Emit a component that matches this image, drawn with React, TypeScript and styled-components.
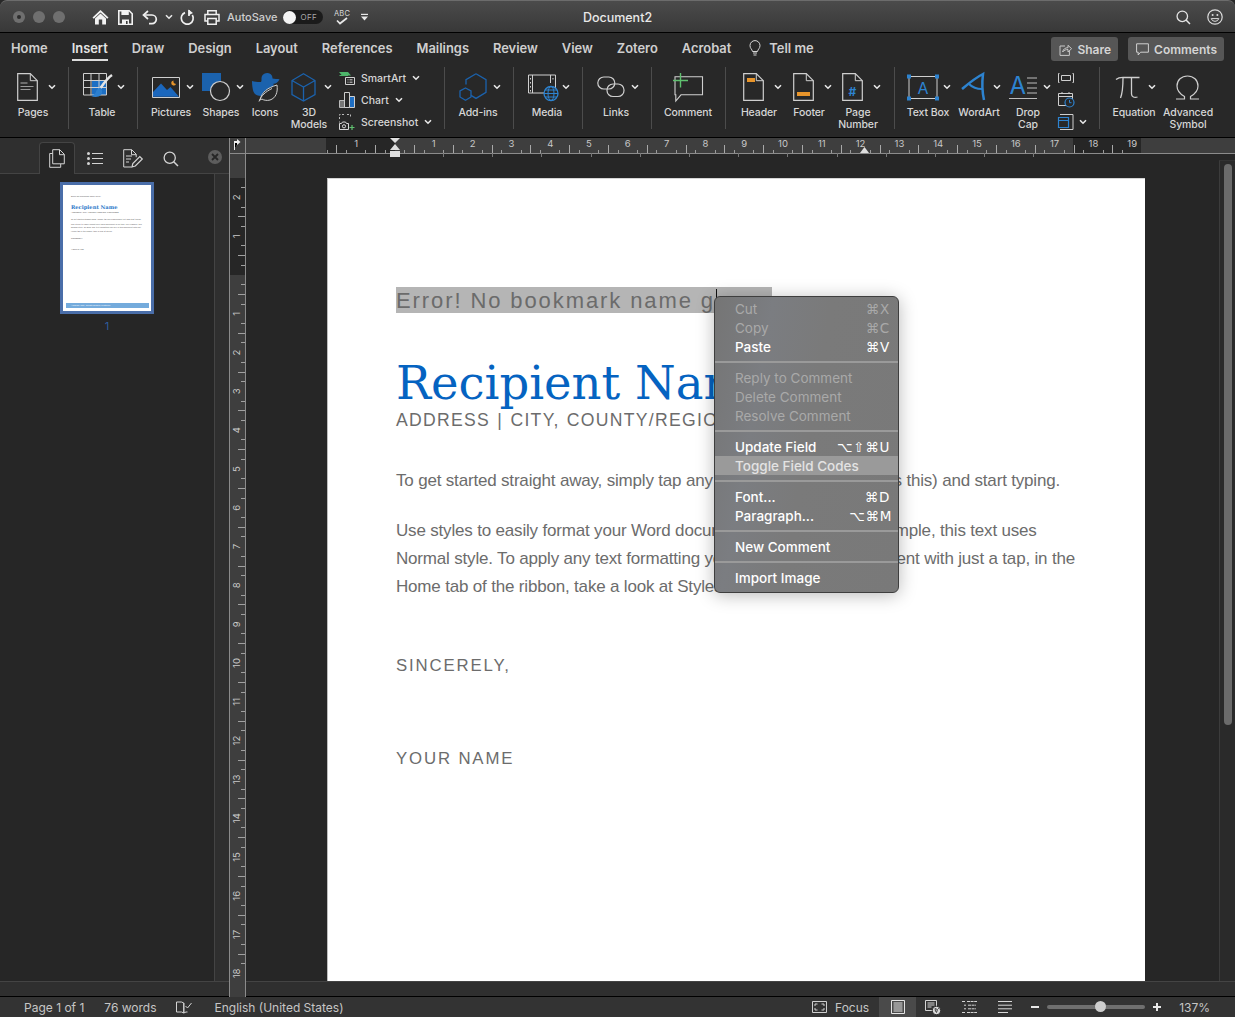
import React from "react";
import styled, { createGlobalStyle } from "styled-components";

const UI = `Inter, "Noto Sans", "DejaVu Sans", sans-serif`;
const BLUE = "#1b62ad";
const SKY = "#2d83d0";
const LINE = "#cfcfcf";
const ORANGE = "#e8952b";
const GREEN = "#5fc06f";

const Global = createGlobalStyle`
  html, body { margin: 0; padding: 0; background: #262626; }
  * { box-sizing: border-box; }
`;

const Root = styled.div`
  position: relative;
  width: 1235px;
  height: 1017px;
  overflow: hidden;
  display: flex;
  flex-direction: column;
  font-family: ${UI};
  background: #282828;
`;

/* ---------- title bar ---------- */
const TitleBar = styled.header`
  flex: none;
  height: 33px;
  padding-top: 1px;
  display: grid;
  grid-template-columns: 1fr auto 1fr;
  align-items: center;
  background: linear-gradient(#4b4b4b, #383838);
  border-top: 1px solid #6c6c6c;
  border-bottom: 1px solid #000;
  border-radius: 7px 7px 0 0;
`;
const TitleLeft = styled.div`
  display: flex;
  align-items: center;
  padding-left: 13px;
`;
const Light = styled.span`
  width: 12px;
  height: 12px;
  margin-right: 8px;
  border-radius: 50%;
  background: #6f6f6f;
  display: flex;
  align-items: center;
  justify-content: center;
  &:first-child::after {
    content: "";
    width: 4px;
    height: 4px;
    border-radius: 50%;
    background: #2c2c2c;
  }
`;
const QuickTools = styled.div`
  display: flex;
  align-items: center;
  margin-left: 19px;
  gap: 9px;
  color: #eee;
`;
const ChevSlot = styled.span`
  margin: 0 -2px 0 -2px;
`;
const AutoSave = styled.span`
  margin-left: -2px;
  font-size: 11px;
  font-weight: 500;
  color: #cfcfcf;
`;
const Toggle = styled.span`
  width: 40px;
  height: 14px;
  margin: 0 2px 0 -3px;
  border-radius: 7px;
  background: #1b1b1b;
  display: flex;
  align-items: center;
  font-size: 8px;
  letter-spacing: 0.4px;
  color: #a8a8a8;
  &::before {
    content: "";
    width: 13px;
    height: 13px;
    border-radius: 50%;
    background: #f3f3f3;
    margin-right: 4px;
  }
`;
const DocTitle = styled.div`
  font-size: 12.5px;
  font-weight: 500;
  color: #e8e8e8;
`;
const TitleRight = styled.div`
  display: flex;
  justify-content: flex-end;
  align-items: center;
  gap: 16px;
  padding-right: 12px;
`;

/* ---------- tabs ---------- */
const TabBar = styled.nav`
  flex: none;
  height: 33px;
  display: flex;
  align-items: flex-start;
  gap: 24px;
  padding: 1px 11px 0;
`;
const Tab = styled.span<{ $active?: boolean }>`
  height: 27px;
  line-height: 29px;
  font-size: 12.9px;
  font-weight: 600;
  color: ${(p) => (p.$active ? "#e4e4e4" : "#cfcfcf")};
  border-bottom: 2px solid ${(p) => (p.$active ? "#dcdcdc" : "transparent")};
`;
const TellMe = styled.span`
  height: 28px;
  display: flex;
  align-items: center;
  gap: 8px;
  margin-left: -6px;
  font-size: 12.9px;
  font-weight: 600;
  color: #cfcfcf;
`;
const TabActions = styled.div`
  margin: 3px 0 0 auto;
  display: flex;
  gap: 10px;
`;
const ActionButton = styled.button`
  height: 24px;
  padding: 0 7px 0 8px;
  display: flex;
  align-items: center;
  gap: 5px;
  border: 0;
  border-radius: 3px;
  background: #565656;
  color: #d4d4d4;
  font-family: ${UI};
  font-size: 12px;
  font-weight: 600;
`;

/* ---------- ribbon ---------- */
const Ribbon = styled.section`
  flex: none;
  height: 72px;
  display: flex;
  padding-top: 1px;
  border-bottom: 1px solid #000;
`;
const Group = styled.div<{ $w: number; $last?: boolean }>`
  flex: none;
  width: ${(p) => p.$w}px;
  height: 62px;
  display: flex;
  border-right: ${(p) => (p.$last ? "0" : "1px solid #4c4c4c")};
`;
const ToolBox = styled.div<{ $ml: number; $w: number }>`
  flex: none;
  width: ${(p) => p.$w}px;
  margin-left: ${(p) => p.$ml}px;
  padding-top: 2px;
  display: flex;
  flex-direction: column;
`;
const IconRow = styled.div<{ $ix: number; $cg: number }>`
  flex: none;
  height: 36px;
  padding-left: ${(p) => p.$ix}px;
  display: flex;
  align-items: center;
  gap: ${(p) => p.$cg}px;
  white-space: nowrap;
`;
const ToolLabel = styled.div`
  flex: none;
  margin-top: 2px;
  width: 100%;
  font-size: 10.5px;
  font-weight: 500;
  line-height: 12px;
  letter-spacing: -0.1px;
  text-align: center;
  white-space: pre;
  color: #d6d6d6;
`;
const SmallColumn = styled.div<{ $ml: number }>`
  flex: none;
  margin-left: ${(p) => p.$ml}px;
  height: 66px;
  display: flex;
  flex-direction: column;
`;
const SmallRow = styled.div<{ $gap?: number }>`
  flex: none;
  height: 22px;
  display: flex;
  align-items: center;
  gap: ${(p) => p.$gap ?? 6}px;
  font-size: 10.5px;
  font-weight: 500;
  color: #d6d6d6;
  white-space: nowrap;
`;

/* ---------- workspace ---------- */
const Workspace = styled.main`
  flex: 1;
  min-height: 0;
  display: flex;
`;
const Sidebar = styled.aside`
  flex: none;
  width: 229px;
  display: flex;
  flex-direction: column;
  background: #2f2f2f;
`;
const SideTabs = styled.div`
  flex: none;
  height: 36px;
  padding: 4px 0 0 39px;
  display: flex;
  align-items: flex-start;
  border-bottom: 1px solid #444;
`;
const SideTab = styled.span<{ $active?: boolean; $w: number }>`
  flex: none;
  width: ${(p) => p.$w}px;
  height: 32px;
  display: flex;
  align-items: center;
  justify-content: center;
  border-radius: 4px 4px 0 0;
  background: ${(p) => (p.$active ? "#262626" : "transparent")};
  border: 1px solid ${(p) => (p.$active ? "#444" : "transparent")};
  border-bottom: 0;
`;
const CloseDot = styled.span`
  width: 14px;
  height: 14px;
  margin: 8px 7px 0 auto;
  border-radius: 50%;
  background: #5d5d5d;
  display: flex;
  align-items: center;
  justify-content: center;
`;
const ThumbPane = styled.div`
  flex: 1;
  width: 215px;
  background: #262626;
  border-right: 1px solid #444;
  padding: 8px 0 0 60px;
`;
const Thumb = styled.div`
  width: 94px;
  height: 132px;
  border: 3px solid #4a6ea9;
  background: #fff;
  display: flex;
  flex-direction: column;
  padding: 10px 2px 2px;
  color: #555;
  overflow: hidden;
`;
const ThumbLine = styled.div<{ $mt?: number }>`
  flex: none;
  font-family: "Liberation Sans", sans-serif;
  font-size: 2.1px;
  line-height: 3.6px;
  padding-left: 6px;
  white-space: nowrap;
  margin-top: ${(p) => p.$mt ?? 0}px;
`;
const ThumbName = styled.div`
  flex: none;
  font-family: "DejaVu Serif", serif;
  font-size: 5.2px;
  font-weight: 700;
  line-height: 7px;
  color: #2a77c9;
  padding-left: 6px;
  margin-top: 5px;
`;
const ThumbFoot = styled.div`
  margin: auto 0 1px 1px;
  height: 5px;
  background: #74abdc;
  color: #fff;
  font-family: "Liberation Sans", sans-serif;
  font-size: 2.2px;
  line-height: 5px;
  padding-left: 5px;
`;
const ThumbNumber = styled.div`
  width: 94px;
  margin-top: 5px;
  text-align: center;
  font-size: 11px;
  color: #2e5c9e;
`;
const SideFoot = styled.div`
  flex: none;
  height: 15px;
  border-top: 1px solid #444;
`;

const Editor = styled.div`
  flex: 1;
  min-width: 0;
  display: flex;
  flex-direction: column;
`;
const RulerSvg = styled.svg`
  display: block;
  flex: none;
  position: relative;
  z-index: 1;
  overflow: visible;
  font-family: ${UI};
`;
const EditorBody = styled.div`
  flex: 1;
  min-height: 0;
  display: flex;
`;
const DocColumn = styled.div`
  flex: 1;
  min-width: 0;
  display: flex;
  flex-direction: column;
`;
const DocScroll = styled.div`
  flex: 1;
  min-height: 0;
  display: flex;
  background: #262626;
`;
const DocStage = styled.div`
  flex: 1;
  padding: 24px 0 0 81px;
`;
const Page = styled.article`
  position: relative;
  width: 818px;
  height: 803px;
  padding: 109px 0 0 68px;
  background: #fff;
  border-left: 1px solid #bdbdbd;
  border-top: 1px solid #d5d5d5;
  overflow: hidden;
  font-family: "Liberation Sans", Arial, sans-serif;
  color: #6c6c6c;
`;
const FieldError = styled.div`
  width: 376px;
  height: 26px;
  margin-top: -1px;
  line-height: 28px;
  background: #b5b5b5;
  color: #6b6b6b;
  font-size: 22px;
  letter-spacing: 1.9px;
  white-space: nowrap;
`;
const Caret = styled.span`
  position: absolute;
  left: 388px;
  top: 110px;
  width: 1px;
  height: 9px;
  background: #111;
`;
const Name = styled.h1`
  margin: 43px 0 0;
  font-family: "DejaVu Serif", "Liberation Serif", serif;
  font-size: 46.5px;
  font-weight: 400;
  line-height: 54px;
  color: #0563c1;
  white-space: nowrap;
`;
const Address = styled.div`
  font-size: 17.6px;
  line-height: 20px;
  letter-spacing: 1.3px;
  word-spacing: 1px;
  white-space: nowrap;
`;
const Para = styled.p<{ $mt: number }>`
  margin: ${(p) => p.$mt}px 0 0;
  font-size: 17px;
  line-height: 28px;
  letter-spacing: -0.18px;
  white-space: pre;
`;
const Closing = styled.div<{ $mt: number }>`
  margin-top: ${(p) => p.$mt}px;
  font-size: 16.8px;
  line-height: 24px;
  letter-spacing: 1.85px;
  white-space: nowrap;
`;
const ScrollTrack = styled.div`
  flex: none;
  width: 16px;
  margin-top: 6px;
  padding: 3px 0 0 4px;
  background: #2a2a2a;
  border-left: 1px solid #3c3c3c;
  border-top: 1px solid #333;
`;
const ScrollThumb = styled.div`
  width: 8px;
  height: 561px;
  border-radius: 4px;
  background: #6b6b6b;
`;
const DocFoot = styled.div`
  flex: none;
  height: 15px;
  background: #2f2f2f;
  border-top: 1px solid #444;
`;

/* ---------- status bar ---------- */
const StatusBar = styled.footer`
  flex: none;
  height: 21px;
  display: flex;
  align-items: center;
  justify-content: space-between;
  background: #333;
  border-top: 1px solid #000;
  font-size: 12px;
  color: #c6c6c6;
`;
const StatusGroup = styled.div`
  display: flex;
  align-items: center;
  height: 100%;
`;
const StatusText = styled.span<{ $ml: number; $mr?: number }>`
  margin-left: ${(p) => p.$ml}px;
  margin-right: ${(p) => p.$mr ?? 0}px;
  white-space: nowrap;
`;
const StatusIcon = styled.span<{ $ml: number; $w?: number; $active?: boolean }>`
  margin-left: ${(p) => p.$ml}px;
  width: ${(p) => (p.$w ? `${p.$w}px` : "auto")};
  height: 100%;
  display: flex;
  align-items: center;
  justify-content: center;
  background: ${(p) => (p.$active ? "#4a4a4a" : "transparent")};
`;
const Slider = styled.span`
  position: relative;
  width: 98px;
  height: 4px;
  margin-left: 8px;
  border-radius: 2px;
  background: #6f6f6f;
  &::after {
    content: "";
    position: absolute;
    left: 48px;
    top: -4px;
    width: 11px;
    height: 11px;
    border-radius: 50%;
    background: #cdcdcd;
  }
`;

/* ---------- context menu ---------- */
const Menu = styled.div`
  position: absolute;
  z-index: 5;
  left: 714px;
  top: 296px;
  width: 185px;
  height: 297px;
  padding-top: 2px;
  border: 1px solid #3e3e3e;
  border-radius: 6px;
  background: linear-gradient(100deg, #757575, #7b7d81 25%, #7a7a7a 50%, #797979);
  box-shadow: 0 2px 18px rgba(0, 0, 0, 0.28);
  font-size: 13.5px;
  font-weight: 500;
`;
const MenuRow = styled.div<{ $disabled?: boolean; $hot?: boolean }>`
  height: 19px;
  padding: 0 8px 0 20px;
  display: flex;
  align-items: center;
  justify-content: space-between;
  color: ${(p) => (p.$disabled ? "#a9a9a9" : p.$hot ? "#e3e3e3" : "#fff")};
  font-weight: ${(p) => (p.$disabled ? 400 : 500)};
  background: ${(p) => (p.$hot ? "#9a9a9a" : "transparent")};
  white-space: nowrap;
`;
const Shortcut = styled.span<{ $nudge?: number }>`
  font-family: "DejaVu Sans", ${UI};
  font-size: 13.5px;
  letter-spacing: 0.7px;
  margin-right: ${(p) => p.$nudge ?? 0}px;
`;
const MenuSep = styled.div`
  height: 2px;
  margin: 5px 0;
  background: #9a9a9a;
`;

/* ---------- icons ---------- */
const IconSvg = styled.svg`
  flex: none;
  display: block;
  overflow: visible;
`;
const Svg: React.FC<{ w: number; h: number; children: React.ReactNode }> = ({ w, h, children }) => (
  <IconSvg width={w} height={h} viewBox={`0 0 ${w} ${h}`} fill="none">
    {children}
  </IconSvg>
);
const Chev = ({ c = "#e8e8e8" }: { c?: string }) => (
  <Svg w={8} h={6}>
    <path d="M1 1.2l3 3 3-3" stroke={c} strokeWidth="1.6" />
  </Svg>
);
const Home = () => (
  <Svg w={17} h={16}>
    <path d="M0.5 8.5L8.5 1l8 7.5-1.3 1.2L8.5 3.6 1.8 9.7z" fill="#f2f2f2" />
    <path d="M3 9.5l5.5-5 5.5 5V15.5h-3.8v-5H6.8v5H3z" fill="#f2f2f2" />
  </Svg>
);
const Save = () => (
  <Svg w={15} h={15}>
    <path d="M.8.8h10.4L14.2 3.8v10.4H.8z" stroke="#f2f2f2" strokeWidth="1.6" />
    <path d="M3.4 1h7.4v4H3.4zM4 9.5h7v5H4z" fill="#f2f2f2" />
    <path d="M8 11h1.6v3H8z" fill="#3e3e3e" />
  </Svg>
);
const Undo = () => (
  <Svg w={16} h={15}>
    <path d="M6 1L1.5 5 6 9" stroke="#f0f0f0" strokeWidth="1.7" />
    <path d="M2 5h8a4.2 4.2 0 0 1 0 8.6H7" stroke="#f0f0f0" strokeWidth="1.7" />
  </Svg>
);
const Redo = () => (
  <Svg w={15} h={16}>
    <path d="M5 3.6A6 6 0 1 0 12.3 6" stroke="#f0f0f0" strokeWidth="1.7" />
    <path d="M8.5 .5v6l1.6-1L13 4z" fill="#f0f0f0" />
    <path d="M9 1v6" stroke="#f0f0f0" strokeWidth="1.7" />
  </Svg>
);
const PrintIcon = () => (
  <Svg w={16} h={15}>
    <path d="M3.8 4V.8h8.4V4M3.6 11H1V4.6h14V11h-2.6M3.8 8.6h8.4v5.6H3.8z" stroke="#f0f0f0" strokeWidth="1.5" />
  </Svg>
);
const Spell = () => (
  <Svg w={17} h={17}>
    <text x="0" y="7" fontSize="7.5" fontFamily={UI} fill="#d8d8d8" letterSpacing="0.2">ABC</text>
    <path d="M3 11.5l3 3 7-5.5" stroke="#e8e8e8" strokeWidth="1.7" />
  </Svg>
);
const Customize = () => (
  <Svg w={9} h={8}>
    <path d="M1 .8h7v1.2H1z" fill="#e8e8e8" />
    <path d="M1 3.6h7L4.5 7.6z" fill="#e8e8e8" />
  </Svg>
);
const Search = ({ c = "#e4e4e4", s = 15 }: { c?: string; s?: number }) => (
  <Svg w={s} h={s}>
    <circle cx={s * 0.42} cy={s * 0.42} r={s * 0.35} stroke={c} strokeWidth="1.3" />
    <path d={`M${s * 0.67} ${s * 0.67}L${s - 1} ${s - 1}`} stroke={c} strokeWidth="1.5" />
  </Svg>
);
const Smile = () => (
  <Svg w={16} h={16}>
    <circle cx="8" cy="8" r="7.2" stroke="#dcdcdc" strokeWidth="1.2" />
    <circle cx="5.6" cy="6" r="1" fill="#dcdcdc" />
    <circle cx="10.4" cy="6" r="1" fill="#dcdcdc" />
    <path d="M4.2 9.6a4 4 0 0 0 7.6 0z" stroke="#dcdcdc" />
  </Svg>
);
const Bulb = () => (
  <Svg w={12} h={17}>
    <path d="M3.5 11.5C3 9 1 8.5 1 5.6a5 5 0 0 1 10 0c0 2.9-2 3.4-2.5 5.9z" stroke="#d6d6d6" />
    <path d="M4 13h4M4.5 15h3" stroke="#d6d6d6" />
  </Svg>
);
const ShareIcon = () => (
  <Svg w={13} h={13}>
    <path d="M6 3H1v9.4h9.4V8" stroke="#c8c8c8" />
    <path d="M3.6 9c.6-3 2.7-4.3 5.4-4.3V2.3l3.6 3.4L9 9V6.5C7 6.5 5 7.2 3.6 9z" stroke="#c8c8c8" />
  </Svg>
);
const CommentSmall = () => (
  <Svg w={13} h={13}>
    <path d="M.6.8h11.8v8.4H4.6L2.2 12V9.2H.6z" stroke="#d0d0d0" />
  </Svg>
);
const Fold = ({ children }: { children?: React.ReactNode }) => (
  <Svg w={21} h={28}>
    <path d="M.7.7h12.6l7 7v19.6H.7z" stroke={LINE} strokeWidth="1.2" />
    <path d="M13.3.7v7h7" stroke={LINE} />
    {children}
  </Svg>
);
const PagesIcon = () => (
  <Fold>
    <path d="M3.5 10h7" stroke="#9a9a9a" strokeWidth="1.2" />
    <path d="M3.5 13.5h13M3.5 16.5h10" stroke="#9a9a9a" />
  </Fold>
);
const TableIcon = () => (
  <Svg w={30} h={28}>
    <path d="M9 8h14v14H9z" fill="#1d6fc4" />
    <path d="M.5.5h23v21.5H.5zM.5 7.5h23M.5 14.5h23M8 .5v21.5M16 .5v21.5" stroke={LINE} />
    <path d="M29 2c-3 2-8 8-11.5 13" stroke="#e4e4e4" strokeWidth="2.6" />
    <path d="M17 14.5c-3 1-3.6 3-4.3 5-1 2-3 3-4.6 3.5 3 1.5 8 1.5 10-1.5 1.6-2 1.6-4.6-1.1-7z" fill="#2c7fcf" />
  </Svg>
);
const PicturesIcon = () => (
  <Svg w={28} h={21}>
    <path d="M.5.5h27v20H.5z" stroke={LINE} />
    <path d="M1 19.7V15l8-8.5L15 13l3.5-3 8.5 9.7z" fill="#1b67bd" />
    <path d="M21.5 3.5a2.5 2.5 0 1 0 2.5 3.5 3 3 0 0 1-2.5-3.5z" fill={ORANGE} />
  </Svg>
);
const ShapesIcon = () => (
  <Svg w={28} h={28}>
    <path d="M0 0h19v18H0z" fill={BLUE} />
    <circle cx="18" cy="18" r="9.5" fill="#282828" stroke={LINE} strokeWidth="1.2" />
  </Svg>
);
const IconsIcon = () => (
  <Svg w={28} h={30}>
    <path d="M0 9c3 1 7 1 9 1 1-2 0-3.5 1-6 1.5-3 6-4 8.5-2 1.5 1 2 3 2 4.500 2 .5 5 .3 7 .7-1 2.5-3.5 4.5-6 4.5 .5 4-1 8.5-6 11-5 2-12 2-14-3C.5 17 0 13 0 9z" fill={BLUE} />
    <path d="M8 28c2-8 7-12 17-15 1 7-1 13-7 15-3 1-7 0-8-1z" fill="#282828" stroke={LINE} />
    <path d="M7 29.5c2-6 7-10 13-13" stroke={LINE} />
  </Svg>
);
const CubeIcon = () => (
  <Svg w={25} h={29}>
    <path d="M12.5 .8l11.5 6.7v14L12.5 28 1 21.5v-14zM1 7.5l11.5 6.5L24 7.5M12.5 14v14" stroke={BLUE} strokeWidth="1.3" />
  </Svg>
);
const SmartArtIcon = () => (
  <Svg w={16} h={13}>
    <path d="M0 0h9l3 3.5H3z" fill="#4db56a" />
    <path d="M.5 3.5H9" stroke="#4db56a" />
    <path d="M6.5 5.5h9v7h-9zM8.5 7.8h1M10.5 7.8h3M8.5 10.2h1M10.5 10.2h3" stroke="#d0d0d0" />
  </Svg>
);
const ChartIcon = () => (
  <Svg w={16} h={16}>
    <path d="M.5 8.5h5v7h-5z" fill="#777" stroke="#bbb" />
    <path d="M5.5 .5h5v15h-5z" stroke="#ccc" />
    <path d="M10.5 4.5h5v11h-5z" fill="#1f6fc4" stroke="#cfcfcf" />
  </Svg>
);
const ScreenshotIcon = () => (
  <Svg w={16} h={16}>
    <path d="M.5 5V.5h5M8 .5h3.5v3M.5 7.5v1" stroke="#bbb" strokeDasharray="2 1.5" />
    <path d="M.5 9.5h2l1-1.5h3l1 1.5h2v6h-9z" stroke="#d8d8d8" />
    <circle cx="5" cy="12.3" r="1.6" stroke="#d8d8d8" />
    <path d="M13 11v5M10.5 13.5h5" stroke="#5fc06f" strokeWidth="1.2" />
  </Svg>
);
const AddinsIcon = () => (
  <Svg w={28} h={28}>
    <path d="M17 .8l10 5.8v12.8l-10 6-5-3M7 11.5V6.6L17 .8" stroke={BLUE} strokeWidth="1.3" />
    <path d="M6.5 15l5.5 3v6l-5.5 3.2L1 24v-6z" stroke={BLUE} strokeWidth="1.3" />
  </Svg>
);
const MediaIcon = () => (
  <Svg w={30} h={27}>
    <path d="M.5 1h27v18H.5z" stroke={LINE} />
    <path d="M4.5 1v18M22.5 1v8" stroke={LINE} />
    <path d="M2 4h1v1.5H2zM2 8h1v1.5H2zM2 12h1v1.5H2zM2 16h1v1.5H2zM24.5 4h1v1.5h-1z" fill={LINE} />
    <circle cx="23" cy="19.5" r="7" fill="#282828" stroke={SKY} strokeWidth="1.3" />
    <ellipse cx="23" cy="19.5" rx="3" ry="7" stroke={SKY} />
    <path d="M16 19.5h14M17 16h12M17 23h12" stroke={SKY} />
  </Svg>
);
const LinksIcon = () => (
  <Svg w={28} h={22}>
    <rect x=".8" y="1" width="17" height="12" rx="6" stroke={LINE} strokeWidth="1.2" />
    <rect x="10" y="8" width="17" height="12.5" rx="6" stroke={LINE} strokeWidth="1.2" />
  </Svg>
);
const CommentIcon = () => (
  <Svg w={31} h={29}>
    <path d="M3 3.8h27.5v18H9L3.8 28V21.8H3z" stroke={LINE} strokeWidth="1.1" />
    <path d="M8.5 0v14.5M1 7.5h15" stroke={GREEN} strokeWidth="1.4" />
  </Svg>
);
const HeaderIcon = () => (
  <Fold>
    <path d="M4 5h8v4H4z" fill={ORANGE} />
  </Fold>
);
const FooterIcon = () => (
  <Fold>
    <path d="M4 19h13v4H4z" fill={ORANGE} />
  </Fold>
);
const PageNumIcon = () => (
  <Fold>
    <text x="6.5" y="23" fontSize="12" fontWeight="700" fontFamily={UI} fill={SKY}>#</text>
  </Fold>
);
const TextBoxIcon = () => (
  <Svg w={32} h={26}>
    <path d="M2 2.5h28v22H2z" stroke={LINE} />
    <path d="M0 .5h4v4H0zM28 .5h4v4h-4zM0 22.5h4v4H0zM28 22.5h4v4h-4z" fill={SKY} />
    <text x="16" y="20" textAnchor="middle" fontSize="16" fontFamily={UI} fill={SKY}>A</text>
  </Svg>
);
const WordArtIcon = () => (
  <Svg w={24} h={28}>
    <path d="M1 16C7 11 14 5 22 1c-1 8-1 17 1 26" stroke={SKY} strokeWidth="2.5" />
    <path d="M8 11c3 3 8 5 13 5" stroke={SKY} strokeWidth="2.2" />
  </Svg>
);
const DropCapIcon = () => (
  <Svg w={28} h={25}>
    <text x="0.5" y="19" fontSize="24" fontFamily={UI} fill={SKY}>A</text>
    <path d="M18 3h10M18 8h10M18 13h10M18 18h10" stroke="#bdbdbd" />
    <path d="M0 23.5h28" stroke="#bdbdbd" />
  </Svg>
);
const ObjectBox = () => (
  <Svg w={16} h={10}>
    <path d="M1.5.5h-1v9h1M14.5.5h1v9h-1" stroke={LINE} />
    <path d="M3.5 2.5h9v5h-9z" stroke={LINE} />
  </Svg>
);
const DateIcon = () => (
  <Svg w={17} h={16}>
    <path d="M.5 1.5h14v12h-14zM.5 4.5h14M4 0v2M11 0v2" stroke={LINE} />
    <circle cx="11.5" cy="10.5" r="4.5" fill="#282828" stroke={SKY} strokeWidth="1.2" />
    <path d="M11.5 8v2.7h2" stroke={SKY} />
  </Svg>
);
const ObjectIcon = () => (
  <Svg w={16} h={16}>
    <path d="M2 .5h13v15H2" stroke={LINE} />
    <path d="M.5 3.5h10v10H.5zM.5 6.5h10" stroke={SKY} strokeWidth="1.2" />
  </Svg>
);
const PiIcon = () => (
  <Svg w={24} h={23}>
    <path d="M0 3.5C3 1 5 1.5 9 1.5h14.5" stroke="#cfcfcf" strokeWidth="1.3" />
    <path d="M7 2c0 7-.5 15-2.5 20" stroke="#cfcfcf" strokeWidth="1.3" />
    <path d="M15.5 2v16c0 3 3 4 6 3" stroke="#cfcfcf" strokeWidth="1.3" />
  </Svg>
);
const OmegaIcon = () => (
  <Svg w={25} h={25}>
    <path d="M1 24h8.5v-2.5C5 19 2 15.5 2 11 2 5 6.5 1 12.5 1S23 5 23 11c0 4.5-3 8-7.5 10.5V24H24" stroke="#cfcfcf" strokeWidth="1.2" />
  </Svg>
);
const PageTabIcon = () => (
  <Svg w={16} h={19}>
    <path d="M.7 4.5h3M.7 4.5v13.8h11V15" stroke="#d4d4d4" />
    <path d="M3.7.7h7l4.6 4.6v9.5H3.7zM10.5.7v5h4.8" stroke="#d4d4d4" />
  </Svg>
);
const OutlineTabIcon = () => (
  <Svg w={16} h={13}>
    <path d="M5 1.5h11M5 6.5h11M5 11.5h11" stroke="#d4d4d4" />
    <circle cx="1.5" cy="1.5" r="1.5" fill="#d4d4d4" />
    <circle cx="1.5" cy="6.5" r="1.5" fill="#d4d4d4" />
    <circle cx="1.5" cy="11.5" r="1.5" fill="#d4d4d4" />
  </Svg>
);
const ReviewTabIcon = () => (
  <Svg w={20} h={19}>
    <path d="M8.5 18H.7V.7h8l4.5 4.5v3M8.5.7v5h4.7M3 7h6M3 10h5M3 13h3" stroke="#d4d4d4" />
    <path d="M9 18l.8-3.5 7-7 2.5 2.5-7 7z" stroke="#d4d4d4" strokeWidth="1.2" />
  </Svg>
);
const CloseX = () => (
  <Svg w={8} h={8}>
    <path d="M1 1l6 6M7 1L1 7" stroke="#262626" strokeWidth="1.8" />
  </Svg>
);
const Book = () => (
  <Svg w={16} h={13}>
    <path d="M.5 1h5l2.3 1v10L5.500 11h-5zM7.8 2v10l2.2-1h1.500" stroke="#d4d4d4" />
    <path d="M9.5 5l2 2 4-5" stroke="#d4d4d4" />
  </Svg>
);
const FocusIcon = () => (
  <Svg w={15} h={12}>
    <path d="M.5.5h14v11H.5z" stroke="#cfcfcf" />
    <path d="M3 5V3h2.5M12 5V3H9.5M3 7v2h2.5M12 7v2H9.5" stroke="#cfcfcf" />
  </Svg>
);
const PrintLayout = () => (
  <Svg w={14} h={14}>
    <path d="M.5.5h13v13H.5z" stroke="#e4e4e4" />
    <path d="M2.5 3h9M2.5 5h9M2.5 7h9M2.5 9h9M2.5 11h9" stroke="#e4e4e4" />
  </Svg>
);
const WebLayout = () => (
  <Svg w={16} h={15}>
    <path d="M.5.5h11v10H.5zM2.5 3h7M2.5 5h7M2.5 7h4" stroke="#d4d4d4" />
    <circle cx="11.5" cy="10.5" r="4.2" fill="#d8d8d8" stroke="#333" />
    <path d="M10 8.5l2.5 1-1 3-1-1.5zM13 8l1.5 1" stroke="#444" />
  </Svg>
);
const OutlineLayout = () => (
  <Svg w={15} h={12}>
    <path d="M0 .5h3M5 .5h10M2 4.2h2M6 4.2h8M2 7.8h2M6 7.8h8M0 11.5h3M5 11.5h10" stroke="#d4d4d4" strokeDasharray="3 .6" />
  </Svg>
);
const DraftLayout = () => (
  <Svg w={14} h={12}>
    <path d="M0 .5h14M0 4.2h14M0 7.8h14M0 11.5h10" stroke="#d8d8d8" />
  </Svg>
);
const Minus = () => (
  <Svg w={8} h={2}>
    <path d="M0 0h8v2H0z" fill="#e8e8e8" />
  </Svg>
);
const Plus = () => (
  <Svg w={8} h={8}>
    <path d="M3 0h2v3h3v2H5v3H3V5H0V3h3z" fill="#e8e8e8" />
  </Svg>
);

/* ---------- rulers ---------- */
const HRuler = () => {
  const X0 = 229;
  const x = (v: number) => v - X0;
  const unit = 38.8;
  const origin = 395;
  const ticks: React.ReactNode[] = [];
  for (let i = -7; i < 151; i++) {
    const px = origin + (i * unit) / 4;
    if (i % 4 === 0) continue;
    if (px < 327 || px > 1140) continue;
    const tall = i % 2 === 0;
    ticks.push(
      <path
        key={i}
        d={`M${x(px)} ${tall ? 7 : 12}V15`}
        stroke={tall ? "#a8a8a8" : "#9a9a9a"}
      />
    );
  }
  const nums: React.ReactNode[] = [];
  for (let n = -1; n <= 19; n++) {
    if (n === 0) continue;
    nums.push(
      <text key={n} x={x(origin + n * unit)} y={9} fontSize="9.5" textAnchor="middle" fill="#c8c8c8">
        {Math.abs(n)}
      </text>
    );
  }
  const stops: React.ReactNode[] = [];
  for (let k = 0; k < 13; k++) {
    const px = 443.5 + k * 49.2;
    stops.push(<path key={k} d={`M${x(px)} 15v4`} stroke="#777" />);
  }
  return (
    <RulerSvg width={1006} height={16} viewBox="0 0 1006 16" shapeRendering="crispEdges">
      <rect width="1006" height="15" fill="#3e3e3e" />
      <rect x={x(326)} width="69" height="15" fill="#262626" />
      <rect x={x(1073)} width="68" height="15" fill="#262626" />
      <rect y="15" width="1006" height="1" fill="#262626" />
      <path d="M0 15.5H1006" stroke="#8b8b8b" />
      <path d="M0.5 0V16M16.5 0V16" stroke="#8b8b8b" />
      <path d="M5.5 12V4h3" stroke="#eee" strokeWidth="1.4" />
      <path d="M8 1v6l3.5-3z" fill="#eee" shapeRendering="auto" />
      {ticks}
      <g shapeRendering="auto">{nums}</g>
      {stops}
      <g shapeRendering="auto">
        <path d={`M${x(390)} 0h10l-5 5zM${x(390)} 12l5-6 5 6z`} fill="#dedede" />
        <rect x={x(390)} y="13" width="10" height="6" fill="#dedede" />
        <path d={`M${x(860)} 15l4.5-6 4.5 6z`} fill="#dedede" />
      </g>
    </RulerSvg>
  );
};

const VRuler = () => {
  const unit = 38.8;
  const origin = 275;
  const H = 843;
  const y = (v: number) => v - 154;
  const ticks: React.ReactNode[] = [];
  for (let i = -9; i < 73; i++) {
    const py = origin + (i * unit) / 4;
    if (i % 4 === 0) continue;
    const tall = i % 2 === 0;
    ticks.push(<path key={i} d={`M${tall ? 9 : 12} ${y(py)}H16`} stroke="#a0a0a0" />);
  }
  const nums: React.ReactNode[] = [];
  const label = (n: number, py: number) => (
    <text
      key={`${n}-${py}`}
      transform={`translate(10.5 ${y(py)}) rotate(-90)`}
      fontSize="9.5"
      textAnchor="middle"
      fill="#c8c8c8"
    >
      {n}
    </text>
  );
  nums.push(label(2, origin - 2 * unit), label(1, origin - unit));
  for (let n = 1; n <= 18; n++) nums.push(label(n, origin + n * unit));
  return (
    <RulerSvg width={17} height={H} viewBox={`0 0 17 ${H}`} shapeRendering="crispEdges">
      <rect width="17" height={H} fill="#3e3e3e" />
      <rect y={y(178)} width="17" height="97" fill="#262626" />
      {ticks}
      <g shapeRendering="auto">{nums}</g>
      <path d={`M0.5 0V${H}M16.5 0V${H}`} stroke="#8b8b8b" />
    </RulerSvg>
  );
};

/* ---------- composed parts ---------- */
type ToolProps = {
  label: string;
  ml: number;
  w: number;
  ix: number;
  cg?: number;
  icon: React.ReactNode;
};
const Tool: React.FC<ToolProps> = ({ label, ml, w, ix, cg, icon }) => (
  <ToolBox $ml={ml} $w={w}>
    <IconRow $ix={ix} $cg={cg ?? 0}>
      {icon}
      {cg !== undefined && <Chev />}
    </IconRow>
    <ToolLabel>{label}</ToolLabel>
  </ToolBox>
);

const Item: React.FC<{ label: string; keys?: string; disabled?: boolean; hot?: boolean; nudge?: number }> = ({
  label,
  keys,
  disabled,
  hot,
  nudge,
}) => (
  <MenuRow $disabled={disabled} $hot={hot}>
    <span>{label}</span>
    {keys && <Shortcut $nudge={nudge}>{keys}</Shortcut>}
  </MenuRow>
);

const tabs = ["Home", "Insert", "Draw", "Design", "Layout", "References", "Mailings", "Review", "View", "Zotero", "Acrobat"];

export default function App() {
  return (
    <Root>
      <Global />
      <TitleBar>
        <TitleLeft>
          <Light />
          <Light />
          <Light />
          <QuickTools>
            <Home />
            <Save />
            <Undo />
            <ChevSlot>
              <Chev />
            </ChevSlot>
            <Redo />
            <PrintIcon />
            <AutoSave>AutoSave</AutoSave>
            <Toggle>OFF</Toggle>
            <Spell />
            <Customize />
          </QuickTools>
        </TitleLeft>
        <DocTitle>Document2</DocTitle>
        <TitleRight>
          <Search />
          <Smile />
        </TitleRight>
      </TitleBar>

      <TabBar>
        {tabs.map((t) => (
          <Tab key={t} $active={t === "Insert"}>
            {t}
          </Tab>
        ))}
        <TellMe>
          <Bulb />
          Tell me
        </TellMe>
        <TabActions>
          <ActionButton>
            <ShareIcon />
            Share
          </ActionButton>
          <ActionButton>
            <CommentSmall />
            Comments
          </ActionButton>
        </TabActions>
      </TabBar>

      <Ribbon>
        <Group $w={69}>
          <Tool label="Pages" ml={8} w={50} ix={9} cg={10} icon={<PagesIcon />} />
        </Group>
        <Group $w={69}>
          <Tool label="Table" ml={8} w={50} ix={6} cg={4} icon={<TableIcon />} />
        </Group>
        <Group $w={307}>
          <Tool label="Pictures" ml={12} w={42} ix={2} cg={6} icon={<PicturesIcon />} />
          <Tool label="Shapes" ml={9} w={40} ix={1} cg={6} icon={<ShapesIcon />} />
          <Tool label="Icons" ml={9} w={30} ix={2} icon={<IconsIcon />} />
          <Tool label={"3D\nModels"} ml={9} w={40} ix={2} cg={8} icon={<CubeIcon />} />
          <SmallColumn $ml={10}>
            <SmallRow>
              <SmartArtIcon />
              SmartArt
              <Chev />
            </SmallRow>
            <SmallRow>
              <ChartIcon />
              Chart
              <Chev />
            </SmallRow>
            <SmallRow>
              <ScreenshotIcon />
              Screenshot
              <Chev />
            </SmallRow>
          </SmallColumn>
        </Group>
        <Group $w={69}>
          <Tool label="Add-ins" ml={13} w={40} ix={1} cg={6} icon={<AddinsIcon />} />
        </Group>
        <Group $w={69}>
          <Tool label="Media" ml={13} w={40} ix={1} cg={4} icon={<MediaIcon />} />
        </Group>
        <Group $w={69}>
          <Tool label="Links" ml={13} w={40} ix={1} cg={6} icon={<LinksIcon />} />
        </Group>
        <Group $w={74}>
          <Tool label="Comment" ml={11} w={50} ix={9} icon={<CommentIcon />} />
        </Group>
        <Group $w={169}>
          <Tool label="Header" ml={14} w={38} ix={3} cg={10} icon={<HeaderIcon />} />
          <Tool label="Footer" ml={12} w={38} ix={3} cg={10} icon={<FooterIcon />} />
          <Tool label={"Page\nNumber"} ml={8} w={44} ix={6} cg={10} icon={<PageNumIcon />} />
        </Group>
        <Group $w={205}>
          <Tool label="Text Box" ml={11} w={44} ix={1} cg={4} icon={<TextBoxIcon />} />
          <Tool label="WordArt" ml={7} w={44} ix={4} cg={8} icon={<WordArtIcon />} />
          <Tool label={"Drop\nCap"} ml={7} w={40} ix={1} cg={6} icon={<DropCapIcon />} />
          <SmallColumn $ml={10}>
            <SmallRow>
              <ObjectBox />
            </SmallRow>
            <SmallRow>
              <DateIcon />
            </SmallRow>
            <SmallRow $gap={5}>
              <ObjectIcon />
              <Chev />
            </SmallRow>
          </SmallColumn>
        </Group>
        <Group $w={135} $last>
          <Tool label="Equation" ml={11} w={46} ix={5} cg={8} icon={<PiIcon />} />
          <Tool label={"Advanced\nSymbol"} ml={5} w={52} ix={13} icon={<OmegaIcon />} />
        </Group>
      </Ribbon>

      <Workspace>
        <Sidebar>
          <SideTabs>
            <SideTab $active $w={36}>
              <PageTabIcon />
            </SideTab>
            <SideTab $w={40}>
              <OutlineTabIcon />
            </SideTab>
            <SideTab $w={36}>
              <ReviewTabIcon />
            </SideTab>
            <SideTab $w={40}>
              <Search c="#d4d4d4" s={16} />
            </SideTab>
            <CloseDot>
              <CloseX />
            </CloseDot>
          </SideTabs>
          <ThumbPane>
            <Thumb>
              <ThumbLine>Error! No bookmark name given.</ThumbLine>
              <ThumbName>Recipient Name</ThumbName>
              <ThumbLine>ADDRESS | CITY, COUNTY/REGION, POSTCODE</ThumbLine>
              <ThumbLine $mt={3.5}>To get started straight away, simply tap any placeholder text and start typing.</ThumbLine>
              <ThumbLine $mt={1.4}>Use styles to easily format your Word document in no time. For example, this</ThumbLine>
              <ThumbLine>Normal style. To apply any text formatting you see in this document with just</ThumbLine>
              <ThumbLine>Home tab of the ribbon, take a look at Styles.</ThumbLine>
              <ThumbLine $mt={4}>SINCERELY,</ThumbLine>
              <ThumbLine $mt={7.4}>YOUR NAME</ThumbLine>
              <ThumbFoot>Address | City, County/Region, Postcode</ThumbFoot>
            </Thumb>
            <ThumbNumber>1</ThumbNumber>
          </ThumbPane>
          <SideFoot />
        </Sidebar>

        <Editor>
          <HRuler />
          <EditorBody>
            <VRuler />
            <DocColumn>
              <DocScroll>
                <DocStage>
                  <Page>
                    <FieldError>Error! No bookmark name g</FieldError>
                    <Caret />
                    <Name>Recipient Name</Name>
                    <Address>ADDRESS | CITY, COUNTY/REGION, POSTCODE</Address>
                    <Para $mt={37}>To get started straight away, simply tap any placeholder text (such as this) and start typing.</Para>
                    <Para $mt={22}>
                      {"Use styles to easily format your Word document in no time.  For example, this text uses\nNormal style. To apply any text formatting you can see in this document with just a tap, in the\nHome tab of the ribbon, take a look at Styles."}
                    </Para>
                    <Closing $mt={53}>SINCERELY,</Closing>
                    <Closing $mt={69}>YOUR NAME</Closing>
                  </Page>
                </DocStage>
                <ScrollTrack>
                  <ScrollThumb />
                </ScrollTrack>
              </DocScroll>
              <DocFoot />
            </DocColumn>
          </EditorBody>
        </Editor>
      </Workspace>

      <StatusBar>
        <StatusGroup>
          <StatusText $ml={24}>Page 1 of 1</StatusText>
          <StatusText $ml={20}>76 words</StatusText>
          <StatusIcon $ml={19}>
            <Book />
          </StatusIcon>
          <StatusText $ml={23}>English (United States)</StatusText>
        </StatusGroup>
        <StatusGroup>
          <StatusIcon $ml={0}>
            <FocusIcon />
          </StatusIcon>
          <StatusText $ml={8}>Focus</StatusText>
          <StatusIcon $ml={10} $w={37} $active>
            <PrintLayout />
          </StatusIcon>
          <StatusIcon $ml={9}>
            <WebLayout />
          </StatusIcon>
          <StatusIcon $ml={21}>
            <OutlineLayout />
          </StatusIcon>
          <StatusIcon $ml={21}>
            <DraftLayout />
          </StatusIcon>
          <StatusIcon $ml={19}>
            <Minus />
          </StatusIcon>
          <Slider />
          <StatusIcon $ml={8}>
            <Plus />
          </StatusIcon>
          <StatusText $ml={18} $mr={25}>
            137%
          </StatusText>
        </StatusGroup>
      </StatusBar>

      <Menu>
        <Item label="Cut" keys="⌘X" disabled />
        <Item label="Copy" keys="⌘C" disabled />
        <Item label="Paste" keys="⌘V" />
        <MenuSep />
        <Item label="Reply to Comment" disabled />
        <Item label="Delete Comment" disabled />
        <Item label="Resolve Comment" disabled />
        <MenuSep />
        <Item label="Update Field" keys="⌥⇧⌘U" />
        <Item label="Toggle Field Codes" hot />
        <MenuSep />
        <Item label="Font..." keys="⌘D" />
        <Item label="Paragraph..." keys="⌥⌘M" nudge={-2} />
        <MenuSep />
        <Item label="New Comment" />
        <MenuSep />
        <Item label="Import Image" />
      </Menu>
    </Root>
  );
}
